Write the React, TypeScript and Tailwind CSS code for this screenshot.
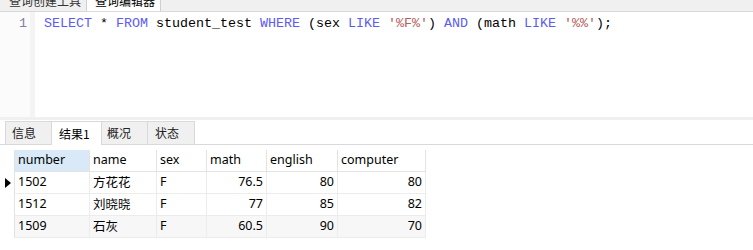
import React from "react";

const ui = { fontFamily: '"Noto Sans", "Noto Sans CJK SC", sans-serif' };
const cjk = { fontFamily: '"Noto Sans CJK SC", "Noto Sans", sans-serif' };
const mono = { fontFamily: '"Liberation Mono", "Courier New", monospace' };

const K = ({ children }: { children: React.ReactNode }) => (
  <span className="text-[#5b5bf5]">{children}</span>
);
const S = ({ children }: { children: React.ReactNode }) => (
  <span className="text-[#b0605e]">{children}</span>
);

const cols = [
  { key: "number", w: 76, align: "left" },
  { key: "name", w: 67, align: "left" },
  { key: "sex", w: 50, align: "left" },
  { key: "math", w: 60, align: "right" },
  { key: "english", w: 71, align: "right" },
  { key: "computer", w: 88, align: "right" },
];

const rows = [
  ["1502", "方花花", "F", "76.5", "80", "80"],
  ["1512", "刘晓晓", "F", "77", "85", "82"],
  ["1509", "石灰", "F", "60.5", "90", "70"],
];

export default function App() {
  return (
    <div className="w-[753px] h-[250px] bg-white overflow-hidden relative" style={ui}>
      {/* top tabs (cut off) */}
      <div className="h-[12px] overflow-hidden bg-[#f0f0f0] border-b border-[#d9d9d9]">
        <div className="flex -mt-[10px] h-[22px]" style={cjk}>
          <div className="w-[87px] shrink-0 h-[22px] border-r border-[#d0d0d0] flex items-center pl-[9px] text-[12px] text-[#333] whitespace-nowrap">
            查询创建工具
          </div>
          <div className="w-[74px] shrink-0 h-[22px] bg-white border-r border-[#d0d0d0] flex items-center pl-[8px] text-[12px] text-black whitespace-nowrap">
            查询编辑器
          </div>
        </div>
      </div>

      {/* editor */}
      <div className="h-[105px] flex">
        <div className="w-[30px] bg-[#fbfbfb] flex justify-end pr-[3px] pt-[4px]">
          <span className="text-[13.33px] leading-[16px] text-[#7f7fa8]" style={mono}>1</span>
        </div>
        <div className="w-[5px] bg-[#f4f4f4]" />
        <div className="pl-[9px] pt-[4px] text-[13.33px] leading-[16px] text-black whitespace-pre" style={mono}>
          <K>SELECT</K> * <K>FROM</K> student_test <K>WHERE</K> (sex <K>LIKE</K> <S>'%F%'</S>) <K>AND</K> (math <K>LIKE</K> <S>'%%'</S>);
        </div>
      </div>

      {/* separator */}
      <div className="h-[3px] bg-[#f0f0f0]" />

      {/* result tabs */}
      <div className="h-[25px] flex items-end pl-[5px] border-b border-[#d9d9d9] text-[12px]" style={cjk}>
        <div className="w-[47px] h-[23px] bg-[#f0f0f0] border border-b-0 border-[#d9d9d9] flex items-center pl-[6px] text-[#222]">信息</div>
        <div className="w-[50px] h-[24px] bg-white border-t border-r border-[#d9d9d9] flex items-center pl-[7px] text-black -mb-px">结果1</div>
        <div className="w-[46px] h-[23px] bg-[#f0f0f0] border-t border-r border-[#d9d9d9] flex items-center pl-[5px] text-[#222]">概况</div>
        <div className="w-[47px] h-[23px] bg-[#f0f0f0] border-t border-r border-[#d9d9d9] flex items-center pl-[7px] text-[#222]">状态</div>
      </div>

      {/* grid */}
      <div className="pt-[5px] pl-[5px]">
        <div className="flex h-[22px]">
          <div className="w-[9px]" />
          {cols.map((c, i) => (
            <div
              key={c.key}
              className={`h-[22px] border-r border-b border-[#e3e3e3] flex items-center px-[3px] text-[12.5px] text-black ${i === 0 ? "bg-[#d9e9f7] border-l" : "bg-white"}`}
              style={{ width: c.w }}
            >
              {c.key}
            </div>
          ))}
        </div>
        {rows.map((r, ri) => (
          <div key={ri} className="flex h-[22px]">
            <div className="w-[9px] flex items-center justify-start">
              {ri === 0 && (
                <svg width="6" height="10" viewBox="0 0 6 10">
                  <path d="M0 0 L6 5 L0 10 Z" fill="#000" />
                </svg>
              )}
            </div>
            {r.map((v, ci) => (
              <div
                key={ci}
                className={`h-[22px] border-r border-b border-[#ececec] flex items-center px-[3px] text-[12.5px] text-black ${ci === 0 ? "border-l border-l-[#e3e3e3]" : ""} ${ri === 2 ? "bg-[#f7f7f7]" : "bg-white"} ${cols[ci].align === "right" ? "justify-end" : "justify-start"}`}
                style={{ width: cols[ci].w, ...(ci === 1 ? cjk : {}) }}
              >
                {v}
              </div>
            ))}
          </div>
        ))}
      </div>
    </div>
  );
}
